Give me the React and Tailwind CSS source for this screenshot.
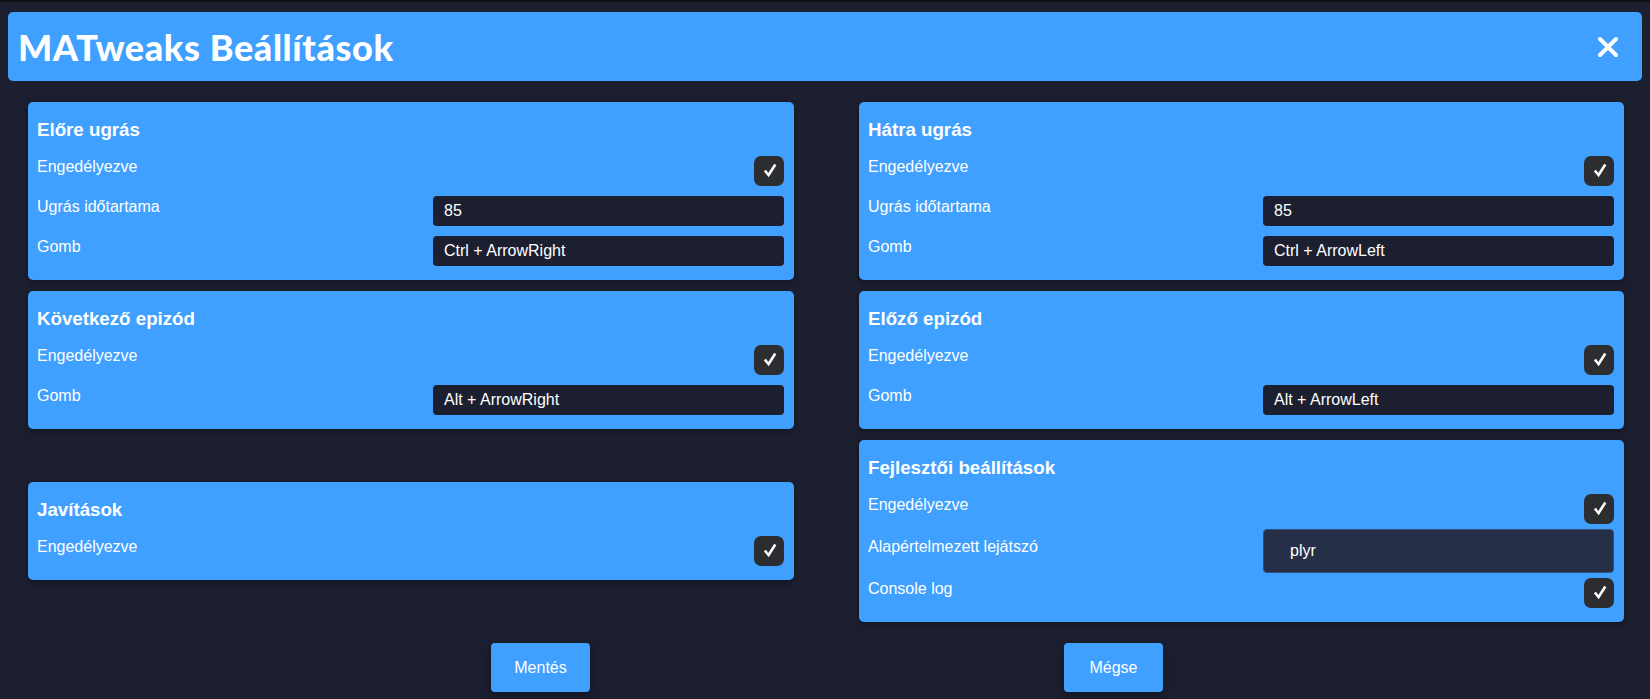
import React from "react";

function Check() {
  return (
    <div className="my-[5px] flex h-[30px] w-[30px] items-center justify-center rounded-[7px] bg-[#2c2d31]">
      <svg width="14" height="15" viewBox="0 0 14 15" className="-mt-[2px] ml-[1px]">
        <path d="M0.8 8.2 L3 6.8 L5.3 10 L11.2 0.8 L13.4 2.2 L5.7 14.2 Z" fill="#ffffff" />
      </svg>
    </div>
  );
}

function Input({ value }) {
  return (
    <div className="my-[5px] flex h-[30px] w-[351px] items-center rounded-[4px] bg-[#1b1f2f] px-[11px] text-[16px] text-white">
      {value}
    </div>
  );
}

function Select({ value }) {
  return (
    <div className="flex h-[44px] w-[351px] items-center rounded-[4px] border border-[#35507a] bg-[#252f48] pl-[26px] text-[16px] text-white">
      {value}
    </div>
  );
}

function Row({ label, children }) {
  return (
    <div className="flex items-center justify-between">
      <span className="mb-[8px] text-[16px] leading-[18px] text-white">{label}</span>
      {children}
    </div>
  );
}

function Card({ title, children }) {
  return (
    <div className="rounded-[5px] bg-[#3fa0ff] pb-[9px] pl-[9px] pr-[10px] pt-[17px] shadow-[0_2px_6px_rgba(0,0,0,0.35)]">
      <h3 className="mb-[10px] text-[18.72px] font-bold leading-[22px] text-white">{title}</h3>
      {children}
    </div>
  );
}

export default function App() {
  return (
    <div className="min-h-[699px] bg-[#1b1f30] font-['Liberation_Sans',Arial,sans-serif] text-white">
      <div className="h-[2px] bg-[#111318]" />
      <div className="mx-[8px] mt-[10px] flex h-[69px] items-center justify-between rounded-[5px] bg-[#3fa0ff] pl-[10px] pr-[23px]">
        <h1 className="font-['Lato',sans-serif] text-[36px] font-black leading-none tracking-[0.6px] text-white">
          MATweaks Beállítások
        </h1>
        <svg width="22" height="22" viewBox="0 0 22 22">
          <path d="M3 3 L19 19 M19 3 L3 19" stroke="#ffffff" strokeWidth="4" strokeLinecap="round" />
        </svg>
      </div>

      <div className="ml-[28px] mt-[21px] grid grid-cols-[766px_765px] items-center gap-x-[65px] gap-y-[11px]">
        <Card title="Előre ugrás">
          <Row label="Engedélyezve"><Check /></Row>
          <Row label="Ugrás időtartama"><Input value="85" /></Row>
          <Row label="Gomb"><Input value="Ctrl + ArrowRight" /></Row>
        </Card>
        <Card title="Hátra ugrás">
          <Row label="Engedélyezve"><Check /></Row>
          <Row label="Ugrás időtartama"><Input value="85" /></Row>
          <Row label="Gomb"><Input value="Ctrl + ArrowLeft" /></Row>
        </Card>
        <Card title="Következő epizód">
          <Row label="Engedélyezve"><Check /></Row>
          <Row label="Gomb"><Input value="Alt + ArrowRight" /></Row>
        </Card>
        <Card title="Előző epizód">
          <Row label="Engedélyezve"><Check /></Row>
          <Row label="Gomb"><Input value="Alt + ArrowLeft" /></Row>
        </Card>
        <Card title="Javítások">
          <Row label="Engedélyezve"><Check /></Row>
        </Card>
        <Card title="Fejlesztői beállítások">
          <Row label="Engedélyezve"><Check /></Row>
          <Row label="Alapértelmezett lejátszó"><Select value="plyr" /></Row>
          <Row label="Console log"><Check /></Row>
        </Card>
      </div>

      <div className="mt-[21px] flex justify-center gap-[474px] pl-[4px]">
        <button className="h-[49px] w-[99px] rounded-[4px] bg-[#3fa0ff] text-[16px] text-white shadow-[0_3px_8px_rgba(0,0,0,0.4)]">
          Mentés
        </button>
        <button className="h-[49px] w-[99px] rounded-[4px] bg-[#3fa0ff] text-[16px] text-white shadow-[0_3px_8px_rgba(0,0,0,0.4)]">
          Mégse
        </button>
      </div>
    </div>
  );
}
